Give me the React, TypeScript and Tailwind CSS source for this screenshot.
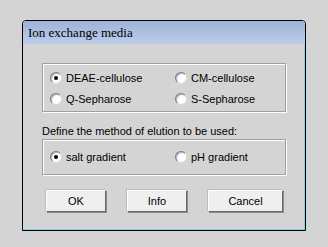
import React from 'react';

function Radio({ label, checked }: { label: string; checked?: boolean }) {
  return (
    <label className="flex items-center gap-[4px] h-[14px]">
      <span className="relative w-[12px] h-[12px] rounded-full bg-white border border-t-[#7a7a7a] border-l-[#7a7a7a] border-r-[#dcdcdc] border-b-[#dcdcdc] shadow-[inset_1px_1px_1px_#b0b0b0] flex items-center justify-center">
        {checked && <span className="w-[4px] h-[4px] rounded-full bg-black" />}
      </span>
      <span>{label}</span>
    </label>
  );
}

function Button({ children, width }: { children: React.ReactNode; width: string }) {
  return (
    <button
      className={`${width} h-[22px] bg-[#efefef] border border-t-white border-l-white border-r-[#6a6a6a] border-b-[#6a6a6a] shadow-[1px_1px_0_#8a8a8a,-1px_-1px_0_#bdbdbd] text-[11px] text-black`}
    >
      {children}
    </button>
  );
}

export default function App() {
  return (
    <div className="w-[328px] h-[247px] bg-[#d4d4d4] pt-[20px] pl-[22px] overflow-hidden" style={{ fontFamily: '"Liberation Sans", Arial, sans-serif' }}>
      <div className="w-[284px] h-[211px] flex flex-col bg-[#d4d4d4] border border-black rounded-t-[4px] shadow-[inset_-1px_-1px_0_#7fd3ee] overflow-hidden">
        <div className="h-[23px] bg-gradient-to-b from-[#9db3d8] to-[#bccde8] flex items-center pl-[5px]">
          <span className="text-[13px] text-black" style={{ fontFamily: '"Liberation Serif", "Times New Roman", serif' }}>
            Ion exchange media
          </span>
        </div>
        <div className="flex-1 px-[19px] pt-[19px] text-[11px] text-black">
          <div className="h-[49px] border border-[#a0a0a0] shadow-[1px_1px_0_#fff,inset_1px_1px_0_#fff] grid grid-cols-[125px_1fr] content-start gap-y-[7px] pt-[7px] pl-[7px]">
            <Radio label="DEAE-cellulose" checked />
            <Radio label="CM-cellulose" />
            <Radio label="Q-Sepharose" />
            <Radio label="S-Sepharose" />
          </div>
          <div className="mt-[13px] leading-[13px]">Define the method of elution to be used:</div>
          <div className="mt-[1px] h-[36px] border border-[#a0a0a0] shadow-[1px_1px_0_#fff,inset_1px_1px_0_#fff] grid grid-cols-[125px_1fr] items-center pl-[7px]">
            <Radio label="salt gradient" checked />
            <Radio label="pH gradient" />
          </div>
          <div className="mt-[15px] flex pl-[4px] gap-[21px]">
            <Button width="w-[60px]">OK</Button>
            <Button width="w-[60px]">Info</Button>
            <Button width="w-[75px]">Cancel</Button>
          </div>
        </div>
      </div>
    </div>
  );
}
